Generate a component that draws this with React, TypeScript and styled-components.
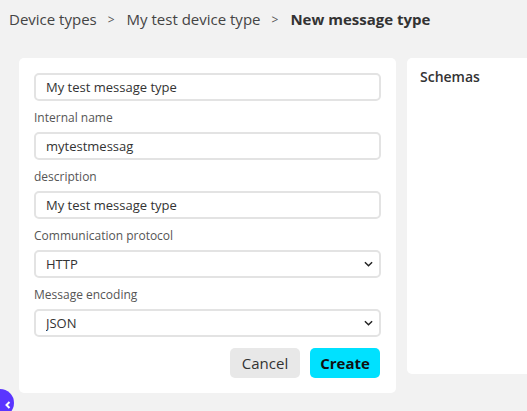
import styled, { createGlobalStyle } from 'styled-components'

const GlobalStyle = createGlobalStyle`
  html, body {
    margin: 0;
    padding: 0;
    background: #f2f2f2;
    overflow: hidden;
  }
  body {
    font-family: 'Open Sans', 'Liberation Sans', sans-serif;
    color: #333;
  }
  * {
    box-sizing: border-box;
  }
`

export default function App() {
  return (
    <>
      <GlobalStyle />
      <Page>
        <Breadcrumbs>
          <Crumb>Device types</Crumb>
          <Separator>&gt;</Separator>
          <Crumb>My test device type</Crumb>
          <Separator>&gt;</Separator>
          <Crumb $current>New message type</Crumb>
        </Breadcrumbs>
        <Columns>
          <FormCard>
            <Input defaultValue="My test message type" />
            <Label>Internal name</Label>
            <Input defaultValue="mytestmessag" />
            <Label>description</Label>
            <Input defaultValue="My test message type" />
            <Label>Communication protocol</Label>
            <SelectWrap>
              <Select defaultValue="HTTP">
                <option>HTTP</option>
                <option>MQTT</option>
              </Select>
              <Chevron viewBox="0 0 10 6">
                <path d="M1 1l4 4 4-4" />
              </Chevron>
            </SelectWrap>
            <Label>Message encoding</Label>
            <SelectWrap>
              <Select defaultValue="JSON">
                <option>JSON</option>
                <option>XML</option>
              </Select>
              <Chevron viewBox="0 0 10 6">
                <path d="M1 1l4 4 4-4" />
              </Chevron>
            </SelectWrap>
            <Actions>
              <Button>Cancel</Button>
              <Button $primary>Create</Button>
            </Actions>
          </FormCard>
          <SchemaCard>
            <CardTitle>Schemas</CardTitle>
          </SchemaCard>
        </Columns>
      </Page>
      <CollapseButton>
        <svg viewBox="0 0 10 10" width="10" height="10">
          <path d="M6.5 2L3.5 5l3 3" />
        </svg>
      </CollapseButton>
    </>
  )
}

const Page = styled.div`
  padding: 0 0 0 9px;
  min-height: 411px;
`

const Breadcrumbs = styled.nav`
  display: flex;
  align-items: center;
  height: 38px;
  font-size: 15px;
  color: #444;
`

const Crumb = styled.span<{ $current?: boolean }>`
  font-weight: ${(p) => (p.$current ? 700 : 400)};
  color: ${(p) => (p.$current ? '#333' : '#444')};
`

const Separator = styled.span`
  font-size: 12px;
  margin: 0 12px 0 11px;
  color: #555;
`

const Columns = styled.div`
  display: flex;
  align-items: flex-start;
  gap: 11px;
  margin-top: 20px;
  padding-left: 10px;
`

const FormCard = styled.section`
  flex: 0 0 377px;
  display: flex;
  flex-direction: column;
  background: #fff;
  border-radius: 5px;
  padding: 15px;
`

const SchemaCard = styled.section`
  flex: 0 0 200px;
  height: 316px;
  background: #fff;
  border-radius: 5px;
  padding: 9px 13px;
`

const CardTitle = styled.h3`
  margin: 0;
  font-size: 14px;
  font-weight: 600;
  color: #333;
`

const Label = styled.label`
  display: block;
  font-size: 12px;
  line-height: 16px;
  color: #555;
  margin: 9px 0 6px;
`

const fieldStyles = `
  width: 100%;
  height: 28px;
  border: 2px solid #e3e3e3;
  border-radius: 5px;
  background: #fff;
  padding: 0 10px;
  font-family: 'Open Sans', 'Liberation Sans', sans-serif;
  font-size: 13px;
  color: #333;
  outline: none;
`

const Input = styled.input`
  ${fieldStyles}
`

const SelectWrap = styled.div`
  position: relative;
`

const Select = styled.select`
  ${fieldStyles}
  appearance: none;
  -webkit-appearance: none;
`

const Chevron = styled.svg`
  position: absolute;
  right: 8px;
  top: 11px;
  width: 9px;
  height: 6px;
  fill: none;
  stroke: #222;
  stroke-width: 1.6;
  pointer-events: none;
`

const Actions = styled.div`
  display: flex;
  justify-content: flex-end;
  gap: 10px;
  margin-top: 11px;
  padding-right: 1px;
`

const Button = styled.button<{ $primary?: boolean }>`
  width: 70px;
  height: 30px;
  border: none;
  border-radius: 5px;
  font-family: 'Open Sans', 'Liberation Sans', sans-serif;
  font-size: 15px;
  font-weight: ${(p) => (p.$primary ? 700 : 400)};
  color: ${(p) => (p.$primary ? '#111' : '#333')};
  background: ${(p) => (p.$primary ? '#00e1ff' : '#e8e8e8')};
  cursor: pointer;
`

const CollapseButton = styled.button`
  position: fixed;
  left: -14px;
  top: 389px;
  width: 28px;
  height: 28px;
  border: none;
  border-radius: 50%;
  background: #5a35ff;
  display: flex;
  align-items: center;
  justify-content: flex-end;
  padding: 0 1px 0 0;

  svg {
    fill: none;
    stroke: #fff;
    stroke-width: 2;
    margin-top: 4px;
  }
`
